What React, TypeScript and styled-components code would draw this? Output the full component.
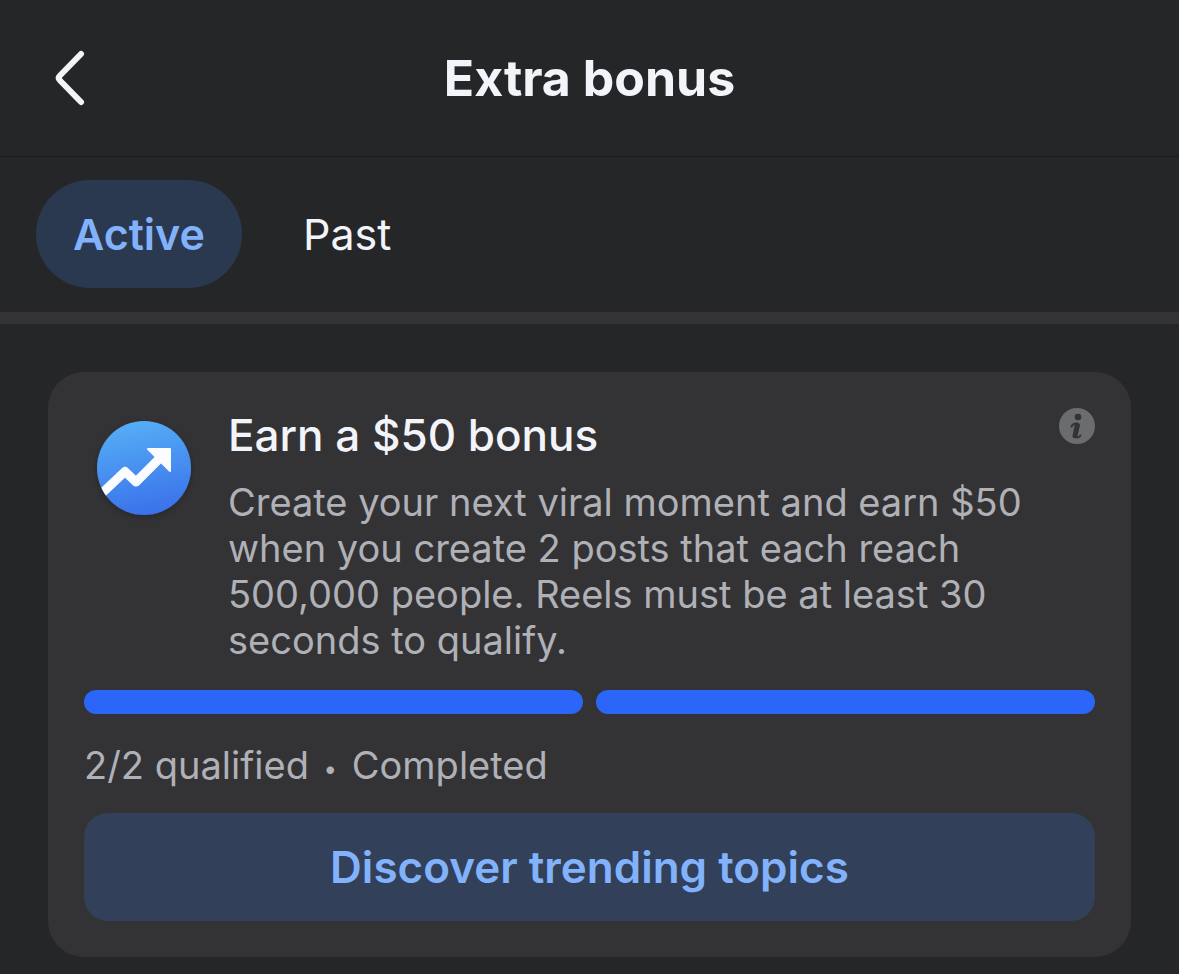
import React, { useState } from "react";
import styled, { createGlobalStyle } from "styled-components";

const GlobalStyle = createGlobalStyle`
  * { box-sizing: border-box; }
  body {
    margin: 0;
    background: #252628;
    color: #f3f4f9;
    font-family: Inter, "Liberation Sans", sans-serif;
  }
  button { font-family: inherit; border: 0; cursor: pointer; }
`;

const Page = styled.div`
  min-height: 100vh;
  background: #252628;
`;

const Header = styled.header`
  display: grid;
  grid-template-columns: 96px 1fr 96px;
  align-items: center;
  height: 157px;
  border-bottom: 1px solid #191a1c;
`;

const BackButton = styled.button`
  display: flex;
  justify-content: flex-end;
  padding: 0 8px 0 0;
  background: none;
  color: #f3f4f9;
`;

const Title = styled.h1`
  margin: 0;
  font-size: 50px;
  line-height: 60px;
  font-weight: 700;
  text-align: center;
`;

const Tabs = styled.nav`
  display: flex;
  gap: 24px;
  padding: 23px 36px 24px;
  border-bottom: 12px solid #333335;
`;

const Tab = styled.button<{ $active: boolean }>`
  height: 108px;
  padding: 0 37px;
  border-radius: 54px;
  background: ${(p) => (p.$active ? "#2a3950" : "transparent")};
  color: ${(p) => (p.$active ? "#82b2fb" : "#f3f4f9")};
  font-size: 43px;
  line-height: 56px;
  font-weight: ${(p) => (p.$active ? 600 : 400)};
`;

const Content = styled.main`
  padding: 48px 48px 16px;
`;

const Card = styled.section`
  display: flex;
  flex-direction: column;
  padding: 36px;
  border-radius: 36px;
  background: #333335;
`;

const Summary = styled.div`
  display: flex;
  align-items: flex-start;
`;

const BonusIcon = styled.svg`
  flex: none;
  width: 120px;
  height: 120px;
`;

const SummaryText = styled.div`
  flex: 1;
  min-width: 0;
  padding: 0 12px 0 24px;
`;

const CardTitle = styled.h2`
  margin: 0;
  font-size: 44px;
  line-height: 54px;
  font-weight: 500;
`;

const Description = styled.p`
  margin: 17px 0 0;
  color: #b0b1b7;
  font-size: 38px;
  line-height: 46px;
`;

const InfoButton = styled.button`
  flex: none;
  display: flex;
  padding: 0;
  background: none;
`;

const Progress = styled.div`
  display: flex;
  gap: 13px;
  margin-top: 27px;
`;

const Segment = styled.span<{ $done: boolean }>`
  flex: 1;
  height: 24px;
  border-radius: 12px;
  background: ${(p) => (p.$done ? "#2b66f8" : "#4a4b4f")};
`;

const Status = styled.p`
  margin: 28px 0 0;
  color: #b0b1b7;
  font-size: 38px;
  line-height: 46px;
`;

const Bullet = styled.span`
  padding: 0 4px;
  font-size: 24px;
  line-height: 24px;
  vertical-align: middle;
`;

const ActionButton = styled.button`
  height: 108px;
  margin-top: 25px;
  border-radius: 24px;
  background: #324059;
  color: #82b2fb;
  font-size: 44px;
  line-height: 56px;
  font-weight: 600;
`;

const tabs = ["Active", "Past"];

export default function App() {
  const [active, setActive] = useState("Active");
  return (
    <Page>
      <GlobalStyle />
      <Header>
        <BackButton aria-label="Back">
          <svg width="36" height="60" viewBox="0 0 36 60" fill="none" aria-hidden="true">
            <path d="M29 6 8 27.500Q5.500 30 8 32.500L29 54" stroke="currentColor" strokeWidth="6" strokeLinecap="round" strokeLinejoin="round" />
          </svg>
        </BackButton>
        <Title>Extra bonus</Title>
      </Header>
      <Tabs>
        {tabs.map((tab) => (
          <Tab key={tab} $active={tab === active} aria-pressed={tab === active} onClick={() => setActive(tab)}>
            {tab}
          </Tab>
        ))}
      </Tabs>
      <Content>
        <Card>
          <Summary>
            <BonusIcon viewBox="0 0 120 120" aria-hidden="true">
              <defs>
                <linearGradient id="bonusFill" x1="0.4" y1="0" x2="0.6" y2="1">
                  <stop offset="0" stopColor="#55aef6" />
                  <stop offset="1" stopColor="#3a70ea" />
                </linearGradient>
                <filter id="bonusShadow" x="-20%" y="-20%" width="140%" height="140%">
                  <feDropShadow dx="0" dy="2" stdDeviation="3" floodColor="#000" floodOpacity="0.25" />
                </filter>
                <clipPath id="bonusClip">
                  <circle cx="60" cy="60" r="47" />
                </clipPath>
              </defs>
              <circle cx="60" cy="60" r="47" fill="url(#bonusFill)" filter="url(#bonusShadow)" />
              <g clipPath="url(#bonusClip)" fill="#fbfcff" stroke="#fbfcff" strokeLinejoin="round">
                <path d="M14 89 41 63.500 52 74 76 50" fill="none" strokeWidth="9" />
                <path d="M64 41H86V63Z" strokeWidth="2" />
              </g>
            </BonusIcon>
            <SummaryText>
              <CardTitle>Earn a $50 bonus</CardTitle>
              <Description>
                Create your next viral moment and earn $50 when you create 2 posts that each reach 500,000 people. Reels
                must be at least 30 seconds to qualify.
              </Description>
            </SummaryText>
            <InfoButton aria-label="More information">
              <svg width="36" height="36" viewBox="0 0 36 36" aria-hidden="true">
                <circle cx="18" cy="18" r="18" fill="#6b6c70" />
                <circle cx="19" cy="9" r="3.300" fill="#333335" />
                <path d="M12.500 18.500Q14 15.500 17 15.500Q20.500 15.500 19.500 19L17.500 26Q16.800 29.500 18.500 29.500T21.500 27.500" fill="none" stroke="#333335" strokeWidth="2" strokeLinecap="round" />
                <path d="M18.200 17.500 16 27.700" stroke="#333335" strokeWidth="5" strokeLinecap="round" />
              </svg>
            </InfoButton>
          </Summary>
          <Progress role="img" aria-label="2 of 2 qualified">
            <Segment $done />
            <Segment $done />
          </Progress>
          <Status>
            2/2 qualified <Bullet>•</Bullet> Completed
          </Status>
          <ActionButton>Discover trending topics</ActionButton>
        </Card>
      </Content>
    </Page>
  );
}
